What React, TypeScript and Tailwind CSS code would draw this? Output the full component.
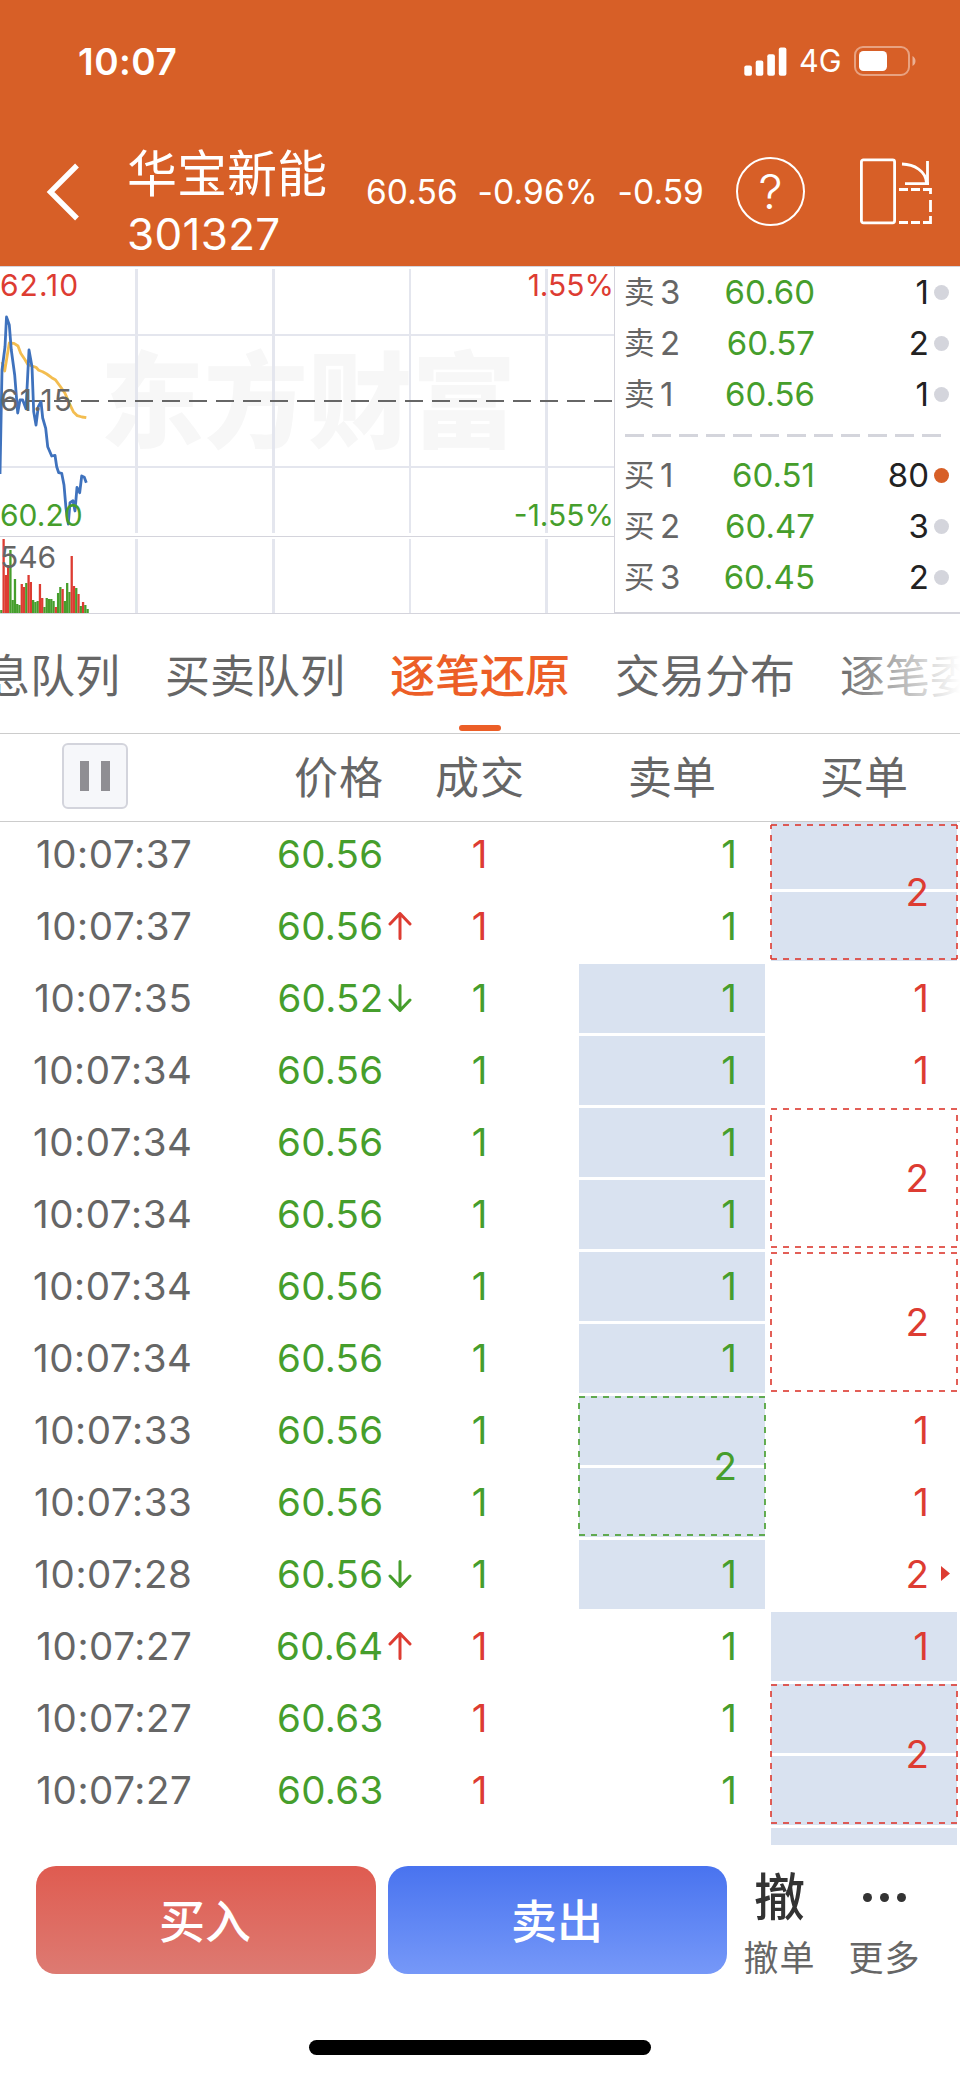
import { clsx } from "clsx";
import { FC, ReactNode } from "react";

type Tone = "up" | "down";

type Trade = {
  time: string;
  price: string;
  tone: Tone;
  move?: Tone;
};

type OrderCell = {
  value?: string;
  filled?: boolean;
  span?: number;
  first?: boolean;
  more?: boolean;
};

type Quote = {
  label: string;
  price: string;
  amount: string;
  active?: boolean;
};

const TRADES: Trade[] = [
  { time: "10:07:37", price: "60.56", tone: "up" },
  { time: "10:07:37", price: "60.56", tone: "up", move: "up" },
  { time: "10:07:35", price: "60.52", tone: "down", move: "down" },
  { time: "10:07:34", price: "60.56", tone: "down" },
  { time: "10:07:34", price: "60.56", tone: "down" },
  { time: "10:07:34", price: "60.56", tone: "down" },
  { time: "10:07:34", price: "60.56", tone: "down" },
  { time: "10:07:34", price: "60.56", tone: "down" },
  { time: "10:07:33", price: "60.56", tone: "down" },
  { time: "10:07:33", price: "60.56", tone: "down" },
  { time: "10:07:28", price: "60.56", tone: "down", move: "down" },
  { time: "10:07:27", price: "60.64", tone: "up", move: "up" },
  { time: "10:07:27", price: "60.63", tone: "up" },
  { time: "10:07:27", price: "60.63", tone: "up" },
];

const SELL_ORDERS: OrderCell[] = [
  { value: "1" },
  { value: "1" },
  { value: "1", filled: true },
  { value: "1", filled: true },
  { value: "1", filled: true },
  { value: "1", filled: true },
  { value: "1", filled: true },
  { value: "1", filled: true },
  { value: "2", filled: true, span: 2 },
  { value: "1", filled: true },
  { value: "1" },
  { value: "1" },
  { value: "1" },
];

const BUY_ORDERS: OrderCell[] = [
  { value: "2", filled: true, span: 2, first: true },
  { value: "1" },
  { value: "1" },
  { value: "2", span: 2 },
  { value: "2", span: 2 },
  { value: "1" },
  { value: "1" },
  { value: "2", more: true },
  { value: "1", filled: true },
  { value: "2", filled: true, span: 2 },
  { filled: true },
];

const ASKS: Quote[] = [
  { label: "卖3", price: "60.60", amount: "1" },
  { label: "卖2", price: "60.57", amount: "2" },
  { label: "卖1", price: "60.56", amount: "1" },
];

const BIDS: Quote[] = [
  { label: "买1", price: "60.51", amount: "80", active: true },
  { label: "买2", price: "60.47", amount: "3" },
  { label: "买3", price: "60.45", amount: "2" },
];

const TABS = ["息队列", "买卖队列", "逐笔还原", "交易分布", "逐笔委托"];

// r = red, g = green, followed by the bar height
const VOLUMES =
  "g3 r74 r38 r48 g63 g13 g34 g9 g8 r29 r26 g30 r38 r31 g13 g11 g12 r29 r15 g6 g15 g14 g14 g12 r6 g20 g26 r24 g12 g30 g21 r57 r27 g25 r19 g7 r11 g8 g4".split(
    " ",
  );

function toneText(tone: Tone) {
  return tone === "up" ? "text-[#dd3c32]" : "text-[#469e2c]";
}

const StatusBar: FC = () => (
  <div className="flex h-[122px] items-center justify-between pr-[43px] pl-[78px]">
    <span className="text-[37px] leading-none font-semibold tracking-[0.5px]">10:07</span>
    <div className="flex items-center">
      <svg className="h-[29px] w-[43px]" viewBox="0 0 43 29" fill="currentColor">
        <rect x="0.3" y="18.5" width="7.6" height="10.3" rx="2" />
        <rect x="11.7" y="13.6" width="7.6" height="15.2" rx="2" />
        <rect x="23.3" y="7.3" width="7.6" height="21.5" rx="2" />
        <rect x="34.800" y="0.4" width="7.6" height="28.4" rx="2" />
      </svg>
      <span className="ml-3 w-[42px] text-[30.5px] leading-none">4G</span>
      <svg className="ml-[13px] h-[30px] w-[63px]" viewBox="0 0 63 30" fill="none">
        <rect x="1" y="1" width="54" height="28" rx="8" stroke="#fff" strokeOpacity="0.42" strokeWidth="2" />
        <rect x="5" y="5" width="28" height="20" rx="4.5" fill="#fff" />
        <path d="M58.5 10c4 2 4 8 0 10z" fill="#fff" fillOpacity="0.5" />
      </svg>
    </div>
  </div>
);

const TitleBar: FC = () => (
  <div className="flex h-[139px] items-center">
    <svg className="ml-[45px] h-[60px] w-9" viewBox="0 0 36 60" fill="none">
      <path d="M32 3.5 5.5 30 32 56.5" stroke="currentColor" strokeWidth="5.4" />
    </svg>
    <div className="mt-6 ml-[46px] w-[200px] shrink-0 whitespace-nowrap">
      <div className="h-[60px] text-[50px] leading-[60px]">华宝新能</div>
      <div className="h-[60px] text-[44px] leading-[60px] tracking-[0.3px]">301327</div>
    </div>
    <div className="mt-[2px] ml-[39px] flex w-[338px] justify-between text-[33.5px] leading-none tracking-[0.1px] whitespace-nowrap">
      <span>60.56</span>
      <span>-0.96%</span>
      <span>-0.59</span>
    </div>
    <div className="ml-8 flex size-[69px] items-center justify-center rounded-full border-[2.7px] border-white text-[48px] leading-none font-light">
      ?
    </div>
    <svg className="ml-[54px] h-[68px] w-[74px]" viewBox="0 0 74 68" fill="none" stroke="currentColor" strokeWidth="2.8">
      <rect x="2.4" y="1.8" width="33.2" height="63" rx="2" />
      <path d="M43 6c12 .3 24 7 24.5 19" />
      <path d="M68.5 3v24M46 25.7h24" />
      <path d="M40 31.500h9M52 31.500h9M64 31.500h7.500v4.500M71.500 42v12M71.500 58v6.500H64M40 64.500h9M52 64.500h9" />
    </svg>
  </div>
);

const MinuteChart: FC = () => (
  <svg className="h-[348px] w-[615px] shrink-0" viewBox="0 266 615 348">
    <text x="100" y="440" fontSize="104" fontWeight="900" fill="#f7f7f7">
      东方财富
    </text>
    <g fill="#e4e6ee">
      {[135, 272, 409, 545].map((x, i) => (
        <g key={x}>
          <rect x={x} y="269" width={i === 2 ? 2 : 3} height="264" />
          <rect x={x} y="539" width={i === 2 ? 2 : 3} height="74" />
        </g>
      ))}
      <rect y="334" width="614" height="2" />
      <rect y="466" width="614" height="2" />
    </g>
    <g fill="#d4d4dc">
      <rect y="266" width="615" height="1" />
      <rect y="536" width="615" height="1" />
      <rect y="613" width="615" height="1" />
      <rect x="614" y="266" width="1" height="348" />
    </g>
    <path d="M0 401H612" stroke="#666" strokeWidth="2" strokeDasharray="18 9" />
    <g fill="none" strokeWidth="2.8" strokeLinejoin="round">
      <path
        d="M2 362 4.700 371 9.300 343 14 343.300 18 346 20.700 353.300 24.700 359.300 28 364.700 32 366 36 367.300 38.700 370.300 42.700 371.700 46.700 374 51.700 377.700 55.300 379.700 60 386 65 393.300 69.300 403.300 73.300 411.700 77.300 415.700 82 417 86.300 417.700"
        stroke="#f3bd50"
      />
      <path
        d="M0 474 2 370 5 346.700 6.500 317 9.300 325 11.300 350 14.700 375 17.700 413 20 400 22.700 400 26 408.700 29 350 32 366.700 33.700 411.700 36 425 38.300 406.700 41 401.700 42.700 418 45.700 428.300 47.700 446.700 51.700 456 55 455.300 56.700 466.700 58.700 472.700 61.700 473.300 64 485 66 508.300 68.300 524 70 502.700 73 500.700 75 511 77 487.300 79.700 492.700 81.700 476 84.300 477.300 86.300 482.700"
        stroke="#3f72bd"
      />
    </g>
    {VOLUMES.map((bar, i) => {
      const height = Number(bar.slice(1));
      return (
        <rect
          key={i}
          x={0.2 + i * 2.27}
          y={613 - height}
          width="2.3"
          height={height}
          fill={bar[0] === "r" ? "#dd3c32" : "#469e2c"}
        />
      );
    })}
    <g fontSize="30">
      <text x="0" y="295.500" fill="#dd3c32" letterSpacing="1">62.10</text>
      <text x="0" y="410.500" fill="#666" letterSpacing="1.2">61.15</text>
      <text x="0" y="525.500" fill="#469e2c">60.20</text>
      <text x="0" y="568" fill="#666">546</text>
      <text x="614" y="295.500" fill="#dd3c32" textAnchor="end">1.55%</text>
      <text x="614" y="525.500" fill="#469e2c" textAnchor="end">-1.55%</text>
    </g>
  </svg>
);

const QuoteRow: FC<{ quote: Quote }> = ({ quote }) => (
  <div className="flex h-[51px] items-center pl-[10px] text-[33px] leading-none">
    <div className="flex w-[74px] items-center text-[#666]">
      <span className="-ml-px w-9 text-[30.5px]">{quote.label[0]}</span>
      <span>{quote.label[1]}</span>
    </div>
    <span className="w-[116px] text-right text-[#469e2c]">{quote.price}</span>
    <span className="w-[114px] text-right text-[#222]">{quote.amount}</span>
    <span
      className={clsx(
        "ml-[5px] size-[15px] rounded-full",
        quote.active ? "bg-[#d75f27]" : "bg-[#d4d5dc]",
      )}
    />
  </div>
);

const OrderBook: FC = () => (
  <div className="flex h-[348px] grow flex-col border-t border-b-2 border-[#d4d4dc]">
    <div>
      {ASKS.map((quote) => (
        <QuoteRow key={quote.label} quote={quote} />
      ))}
    </div>
    <svg className="mt-[14px] mb-[13px] ml-[10px] h-[3px] w-[318px]" viewBox="0 0 318 3">
      <path d="M0 1.500H316" stroke="#d4d5dc" strokeWidth="3" strokeDasharray="19 8" />
    </svg>
    <div>
      {BIDS.map((quote) => (
        <QuoteRow key={quote.label} quote={quote} />
      ))}
    </div>
  </div>
);

const TabBar: FC = () => (
  <div className="relative h-[120px] overflow-hidden border-b border-[#ccc]">
    <div className="-ml-[15px] flex gap-[45px] whitespace-nowrap">
      {TABS.map((tab, index) => (
        <div
          key={tab}
          className={clsx(
            "flex h-[119px] flex-col items-center justify-between pt-[40px] pb-[2px] text-[45px] leading-[46px]",
            index === 2 ? "font-medium text-[#ec5e27]" : "text-[#666]",
          )}
        >
          {tab}
          {index === 2 && <span className="h-[6px] w-[42px] rounded-full bg-[#ec5e27]" />}
        </div>
      ))}
    </div>
    <div className="absolute inset-y-0 right-0 w-[125px] bg-linear-to-r from-white/0 to-white" />
  </div>
);

const TableHead: FC = () => (
  <div className="flex h-[88px] items-center border-b border-[#ccc] text-[44px] leading-none text-[#666]">
    <div className="mb-[3px] ml-[62px] flex size-[66px] items-center justify-center gap-3 rounded-[6px] border-2 border-[#d3d4dc] bg-[#f6f7fa]">
      <span className="h-[30px] w-[9px] bg-[#8f8e93]" />
      <span className="h-[30px] w-[9px] bg-[#8f8e93]" />
    </div>
    <span className="ml-[166px] w-[90px] tracking-[1px]">价格</span>
    <span className="ml-[51px] w-[90px] tracking-[1px]">成交</span>
    <span className="ml-[103px] w-[90px]">卖单</span>
    <span className="ml-[102px] w-[90px]">买单</span>
  </div>
);

const MoveArrow: FC<{ move: Tone }> = ({ move }) => (
  <svg
    className={clsx("h-[30px] w-6", toneText(move), move === "down" && "rotate-180")}
    viewBox="0 0 24 30"
    fill="none"
    stroke="currentColor"
    strokeWidth="3"
    strokeLinecap="round"
    strokeLinejoin="round"
  >
    <path d="M12 27.500V2.500M2 13 12 2.500 22 13" />
  </svg>
);

const TradeRow: FC<{ trade: Trade }> = ({ trade }) => (
  <div className="flex h-[72px] items-center">
    <span className="w-[192.5px] text-right tracking-[0.6px] text-[#666]">{trade.time}</span>
    <span className="w-[191px] text-right tracking-[0.3px] text-[#469e2c]">{trade.price}</span>
    <span className="ml-1 w-6">{trade.move && <MoveArrow move={trade.move} />}</span>
    <span className={clsx("w-[76px] text-right", toneText(trade.tone))}>1</span>
  </div>
);

const OrderColumn: FC<{ cells: OrderCell[]; tone: Tone }> = ({ cells, tone }) => (
  <div className={clsx("w-[186px] shrink-0", toneText(tone))}>
    {cells.map((cell, index) => {
      const span = cell.span ?? 1;
      const top = cell.first ? 7 : 3;
      const bottom = span * 72 - 3;
      return (
        <div key={index} className="relative">
          {Array.from({ length: span }, (_, i) => (
            <div key={i} className="h-[72px] py-[1.5px]">
              <div className={clsx("h-full", cell.filled && "bg-[#d9e2f0]")} />
            </div>
          ))}
          {span > 1 && (
            <svg
              className="absolute inset-0 h-36 w-[186px] overflow-visible"
              viewBox="0 0 186 144"
              stroke="currentColor"
              strokeOpacity="0.82"
              strokeWidth="2"
              strokeDasharray="6 6"
            >
              <path d={`M0 ${top}H186M0 ${bottom}H186`} />
              <path
                d={`M0 ${top}V${bottom}M186 ${top}V${bottom}`}
                strokeDashoffset={cell.first ? 2 : 6}
              />
            </svg>
          )}
          <div
            className={clsx(
              "absolute inset-0 flex items-center justify-end pr-[28px]",
              cell.first && "pt-1",
            )}
          >
            {cell.value}
          </div>
          {cell.more && (
            <svg className="absolute top-[28px] right-[7px] h-[15px] w-[9px]" viewBox="0 0 9 15" fill="currentColor">
              <path d="M0 0 9 7.500 0 15z" />
            </svg>
          )}
        </div>
      );
    })}
  </div>
);

const TradeTable: FC = () => (
  <div className="h-[1023px] overflow-hidden">
    <div className="-mt-1 flex text-[38.5px] leading-none">
      <div className="w-[579px] shrink-0">
        {TRADES.map((trade, index) => (
          <TradeRow key={index} trade={trade} />
        ))}
      </div>
      <OrderColumn cells={SELL_ORDERS} tone="down" />
      <div className="w-[6px] shrink-0" />
      <OrderColumn cells={BUY_ORDERS} tone="up" />
    </div>
  </div>
);

const FooterAction: FC<{ label: string; children: ReactNode }> = ({ label, children }) => (
  <div className="flex w-[105px] flex-col items-center">
    <div className="flex h-[62px] items-center text-[51px] leading-none font-medium text-[#333]">
      {children}
    </div>
    <div className="mt-[12px] text-[35px] leading-[36px] tracking-[1px] text-[#666]">{label}</div>
  </div>
);

const Footer: FC = () => (
  <div className="flex h-[234px] flex-col items-center">
    <div className="flex w-full items-start pt-[21px] pl-9">
      <button className="h-[108px] w-[340px] rounded-[20px] bg-linear-to-b from-[#df5b50] to-[#dd7a72] pt-[2px] pr-[2px] text-[46px] leading-none font-medium text-white">
        买入
      </button>
      <button className="ml-3 h-[108px] w-[339px] rounded-[20px] bg-linear-to-b from-[#4973ef] to-[#7698f8] pt-[2px] pr-px text-[46px] leading-none font-medium text-white">
        卖出
      </button>
      <div className="flex">
        <FooterAction label="撤单">撤</FooterAction>
        <FooterAction label="更多">
          <span className="flex gap-[8px]">
            <span className="size-[9px] rounded-full bg-[#333]" />
            <span className="size-[9px] rounded-full bg-[#333]" />
            <span className="size-[9px] rounded-full bg-[#333]" />
          </span>
        </FooterAction>
      </div>
    </div>
    <div className="mt-16 h-[15px] w-[342px] rounded-full bg-black" />
  </div>
);

export default function App() {
  return (
    <div className="h-[2079px] w-[960px] overflow-hidden bg-white font-['Inter','Noto_Sans_CJK_SC',sans-serif]">
      <header className="h-[266px] bg-[#d75f27] text-white">
        <StatusBar />
        <TitleBar />
      </header>
      <section className="flex h-[348px]">
        <MinuteChart />
        <OrderBook />
      </section>
      <TabBar />
      <TableHead />
      <TradeTable />
      <Footer />
    </div>
  );
}
